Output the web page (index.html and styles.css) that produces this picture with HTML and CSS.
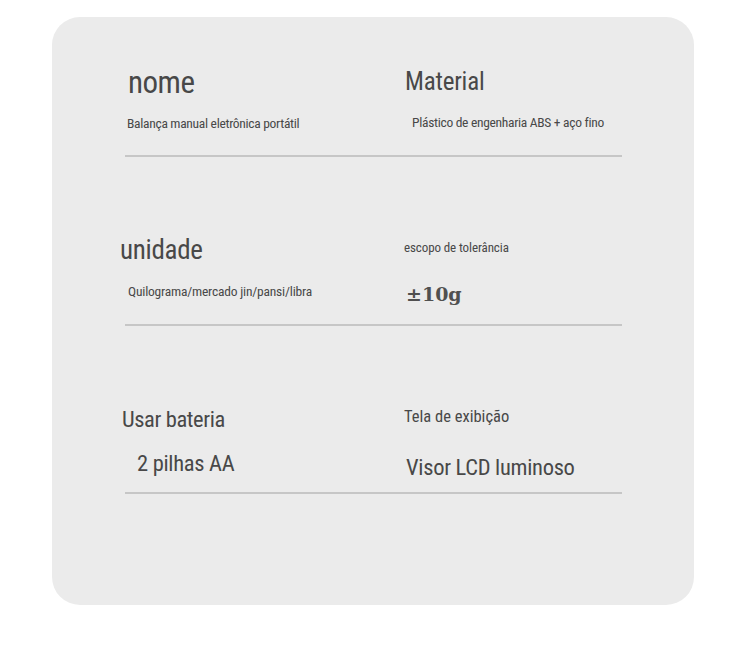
FILE: index.html
```html
<!DOCTYPE html>
<html lang="pt">
<head>
<meta charset="utf-8">
<title>Especificações</title>
<link rel="stylesheet" href="styles.css">
</head>
<body>
<div class="card">
  <div class="row row-1">
    <div class="cell">
      <div class="t-nome">nome</div>
      <div class="s-nome">Balança manual eletrônica portátil</div>
    </div>
    <div class="cell">
      <div class="t-material">Material</div>
      <div class="s-material">Plástico de engenharia ABS + aço fino</div>
    </div>
  </div>
  <div class="row row-2">
    <div class="cell">
      <div class="t-unidade">unidade</div>
      <div class="s-unidade">Quilograma/mercado jin/pansi/libra</div>
    </div>
    <div class="cell">
      <div class="t-escopo">escopo de tolerância</div>
      <div class="s-escopo">±10g</div>
    </div>
  </div>
  <div class="row row-3">
    <div class="cell">
      <div class="t-bateria">Usar bateria</div>
      <div class="s-bateria">2 pilhas AA</div>
    </div>
    <div class="cell">
      <div class="t-tela">Tela de exibição</div>
      <div class="s-tela">Visor LCD luminoso</div>
    </div>
  </div>
</div>
</body>
</html>
```

FILE: styles.css
```css
html, body {
  margin: 0;
  padding: 0;
  background: #ffffff;
}

body {
  width: 750px;
  height: 666px;
  overflow: hidden;
  font-family: Roboto, "DejaVu Sans Condensed", sans-serif;
  font-stretch: 75%;
  color: #484848;
}

.card {
  margin: 17px 0 0 52px;
  width: 642px;
  box-sizing: border-box;
  padding: 0 0 111px 73px;
  background: #ebebeb;
  border-radius: 28px;
}

.row {
  width: 497px;
  box-sizing: border-box;
  display: grid;
  grid-template-columns: 278px 1fr;
  align-items: start;
  border-bottom: 2px solid #c6c6c6;
}

.row-1 { height: 140px; }
.row-2 { height: 169px; }
.row-3 { height: 168px; }

.cell {
  display: flex;
  flex-direction: column;
  align-items: flex-start;
}

.cell > div {
  line-height: 1;
  white-space: nowrap;
}

/* row 1 */
.t-nome {
  font-size: 31px;
  letter-spacing: -0.5px;
  margin: 50px 0 0 3px;
}
.s-nome {
  font-size: 13.5px;
  letter-spacing: -0.3px;
  margin: 19px 0 0 2px;
}
.t-material {
  font-size: 25px;
  letter-spacing: -0.2px;
  margin: 52px 0 0 2px;
}
.s-material {
  font-size: 13.5px;
  letter-spacing: -0.3px;
  margin: 22px 0 0 9px;
}

/* row 2 */
.t-unidade {
  font-size: 27px;
  letter-spacing: -0.3px;
  margin: 80px 0 0 -5px;
}
.s-unidade {
  font-size: 13.5px;
  letter-spacing: -0.2px;
  margin: 21px 0 0 3px;
}
.t-escopo {
  font-size: 13px;
  letter-spacing: -0.1px;
  margin: 84px 0 0 1px;
}
.s-escopo {
  font-family: "DejaVu Serif", "Liberation Serif", serif;
  font-stretch: normal;
  font-weight: bold;
  font-size: 19px;
  color: #505050;
  margin: 31px 0 0 3px;
}

/* row 3 */
.t-bateria {
  font-size: 22.5px;
  letter-spacing: -0.4px;
  margin: 82px 0 0 -3px;
}
.s-bateria {
  font-size: 22.5px;
  letter-spacing: -0.3px;
  margin: 21px 0 0 12px;
}
.t-tela {
  font-size: 16.5px;
  margin: 83px 0 0 1px;
}
.s-tela {
  font-size: 22.5px;
  letter-spacing: -0.3px;
  margin: 30px 0 0 3px;
}
```
